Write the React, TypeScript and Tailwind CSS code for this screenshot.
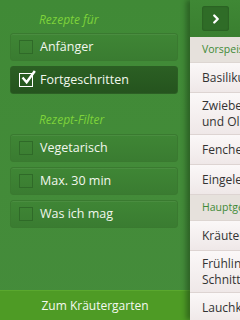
import { ChevronRight } from "lucide-react";

const forLevel = [
  { label: "Anfänger", checked: false },
  { label: "Fortgeschritten", checked: true },
];

const filters = [
  { label: "Vegetarisch", checked: false },
  { label: "Max. 30 min", checked: false },
  { label: "Was ich mag", checked: false },
];

type Row = { kind: "section"; label: string } | { kind: "item"; lines: string[] };

const rows: Row[] = [
  { kind: "section", label: "Vorspeisen" },
  { kind: "item", lines: ["Basilikum-Pesto"] },
  { kind: "item", lines: ["Zwiebelkuchen", "und Oliven"] },
  { kind: "item", lines: ["Fenchelsalat"] },
  { kind: "item", lines: ["Eingelegter Käse"] },
  { kind: "section", label: "Hauptgerichte" },
  { kind: "item", lines: ["Kräuterhähnchen"] },
  { kind: "item", lines: ["Frühlingsquark mit", "Schnittlauch"] },
  { kind: "item", lines: ["Lauchkuchen"] },
];

function FilterButton({ label, checked }: { label: string; checked: boolean }) {
  return (
    <button
      className={
        checked
          ? "flex items-center h-[28px] w-full rounded-[3px] border border-[#2c5f24] bg-gradient-to-b from-[#2b5f23] to-[#25541e] pl-2 text-left"
          : "flex items-center h-[28px] w-full rounded-[3px] border border-[#3a7a30] bg-gradient-to-b from-[#3f8635] to-[#3a7c31] pl-2 text-left shadow-[inset_0_1px_0_rgba(255,255,255,0.06)]"
      }
    >
      {checked ? (
        <span className="relative flex h-[14px] w-[14px] items-center justify-center border-[1.5px] border-white">
          <svg viewBox="0 0 16 16" className="absolute -top-[4px] left-[1px] h-[16px] w-[15px]">
            <path d="M2.5 8.5 L6 12.5 L14 1.5" fill="none" stroke="white" strokeWidth="2.6" strokeLinecap="square" />
          </svg>
        </span>
      ) : (
        <span className="h-[14px] w-[14px] border border-[#2f6a28]" />
      )}
      <span className="ml-[7px] text-[12.5px] text-[#f2f7ee]">{label}</span>
    </button>
  );
}

export default function App() {
  return (
    <div
      className="flex h-[320px] w-[240px] overflow-hidden"
      style={{ fontFamily: "'Open Sans', 'DejaVu Sans', sans-serif" }}
    >
      <aside className="flex w-[190px] shrink-0 flex-col bg-gradient-to-b from-[#408a36] to-[#458c3b]">
        <div className="flex flex-1 flex-col pl-[10px] pr-[12px]">
          <p className="mt-[12px] pl-[29px] text-[12px] italic leading-[16px] text-[#7ed33a]">Rezepte für</p>
          <div className="mt-[5px] flex flex-col gap-[5px]">
            {forLevel.map((f) => (
              <FilterButton key={f.label} {...f} />
            ))}
          </div>
          <p className="mt-[18px] pl-[29px] text-[12px] italic leading-[16px] text-[#7ed33a]">Rezept-Filter</p>
          <div className="mt-[6px] flex flex-col gap-[5px]">
            {filters.map((f) => (
              <FilterButton key={f.label} {...f} />
            ))}
          </div>
        </div>
        <div className="flex h-[30px] items-center justify-center border-t border-[#5aa82e] bg-[#4e9b25] text-[12px] text-[#f4f9ef]">
          Zum Kräutergarten
        </div>
      </aside>

      <main className="relative flex w-[50px] shrink-0 flex-col overflow-hidden bg-[#f4efee] shadow-[-4px_0_5px_rgba(20,50,15,0.45)]">
        <header className="flex h-[37px] shrink-0 items-center bg-gradient-to-b from-[#3f8835] to-[#3a7f30] pl-[12px]">
          <div className="flex h-[25px] w-[27px] items-center justify-center rounded-[3px] bg-[#2f6c27] shadow-[inset_0_0_2px_rgba(0,0,0,0.3)]">
            <ChevronRight className="h-[14px] w-[14px] text-white" strokeWidth={4} />
          </div>
        </header>
        {rows.map((r, i) =>
          r.kind === "section" ? (
            <div
              key={i}
              className="flex h-[26px] shrink-0 items-center overflow-hidden whitespace-nowrap border-b border-[#ddd6d2] bg-[#e6e1dc] pl-[12px] text-[10.5px] text-[#3f8a36]"
            >
              {r.label}
            </div>
          ) : (
            <div
              key={i}
              className={
                (r.lines.length > 1 ? "h-[42px] " : "h-[30px] ") +
                "flex shrink-0 flex-col justify-center overflow-hidden whitespace-nowrap border-b border-[#ddd4d2] bg-gradient-to-b from-[#fbf8f8] to-[#efe8e8] pl-[12px] text-[12px] leading-[16px] text-[#333]"
              }
            >
              {r.lines.map((l) => (
                <span key={l}>{l}</span>
              ))}
            </div>
          )
        )}
      </main>
    </div>
  );
}
